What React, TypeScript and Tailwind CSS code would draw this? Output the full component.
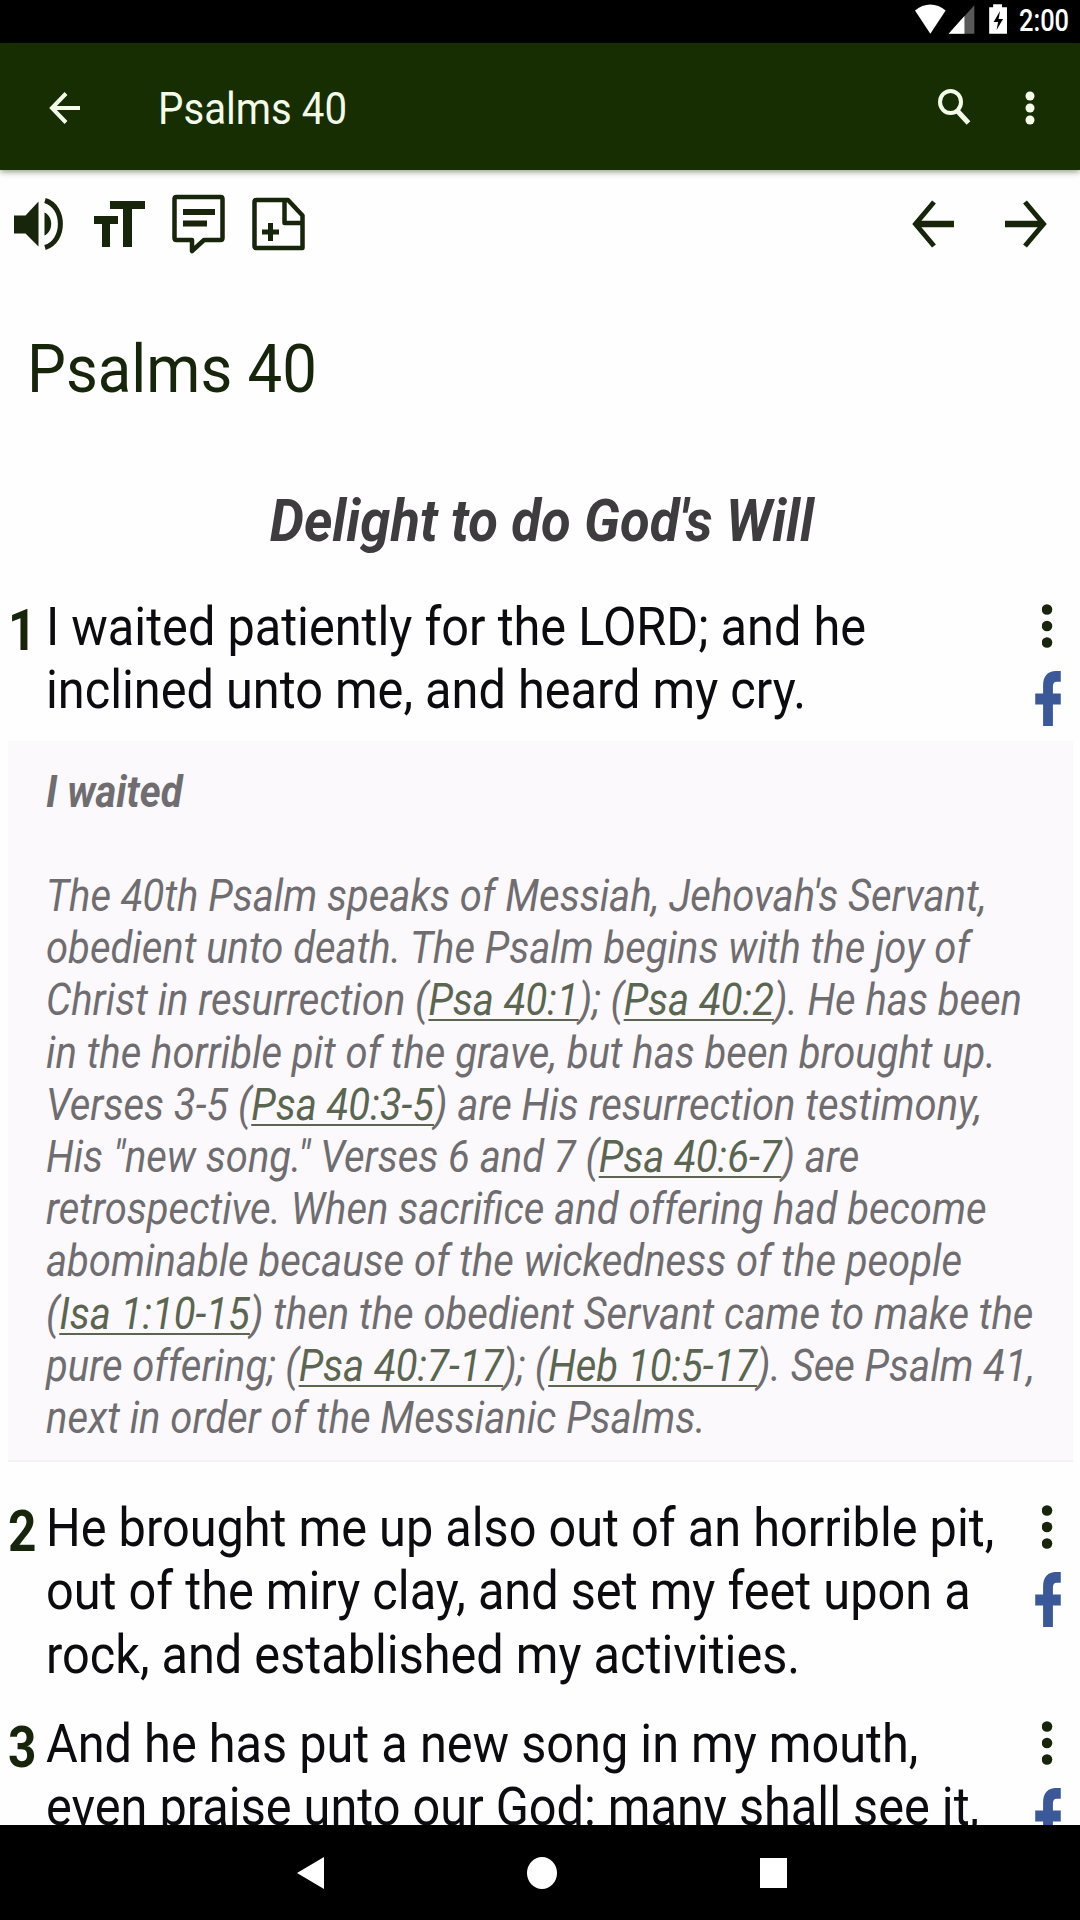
import React from "react";

interface VerseData {
  num: number;
  lines: string[];
}

const VERSE_ONE: VerseData = {
  num: 1,
  lines: ["I waited patiently for the LORD; and he", "inclined unto me, and heard my cry."],
};

const NEXT_VERSES: VerseData[] = [
  {
    num: 2,
    lines: [
      "He brought me up also out of an horrible pit,",
      "out of the miry clay, and set my feet upon a",
      "rock, and established my activities.",
    ],
  },
  {
    num: 3,
    lines: ["And he has put a new song in my mouth,", "even praise unto our God: many shall see it,"],
  },
];

const StatusBar: React.FC = () => (
  <div className="flex h-[43px] shrink-0 items-start bg-black pl-[915px] text-white">
    <svg className="mt-1 h-[30px] w-[94px]" viewBox="0 0 94 30" fill="currentColor">
      <path d="M0 6.5C9-1.8 22-1.8 31 6.5L15.5 30Z" />
      <path d="M60 1V30H34Z" opacity="0.35" />
      <path d="M50 12V30H34Z" />
      <path fillRule="evenodd" d="M79 0h9v3h5v27H75V3h4ZM86 7l-6.500 11h4.500l-1.500 8 6.500-11h-4.500Z" />
    </svg>
    <span className="ml-[11px] mt-[1px] origin-left scale-x-[0.82] text-[31px] font-medium leading-[39px]">2:00</span>
  </div>
);

const AppBar: React.FC = () => (
  <header className="relative flex h-[127px] shrink-0 items-center bg-[#162e02] text-[#f4fbe9] shadow-[0_2px_6px_rgba(22,46,2,0.45)]">
    <svg className="ml-[49px] mt-[2px] h-8 w-[32px]" viewBox="0 0 32 32" fill="none" stroke="currentColor" strokeWidth="4">
      <path d="M31 16H4M17 1.500L3 16l14 14.500" />
    </svg>
    <h1 className="ml-[77px] mt-[5px] flex-1 origin-left scale-x-[0.894] text-[45px] leading-[54px]">Psalms 40</h1>
    <svg className="h-9 w-[34px]" viewBox="0 0 34 36" fill="none" stroke="currentColor" strokeWidth="4">
      <ellipse cx="13.500" cy="13" rx="10.500" ry="11" />
      <path d="M20 21.500L31.500 34" strokeWidth="5" />
    </svg>
    <svg className="ml-[54px] mr-[45px] mt-[2px] h-9 w-[10px]" viewBox="0 0 10 36" fill="currentColor">
      <circle cx="5" cy="6" r="4.500" />
      <circle cx="5" cy="18" r="4.500" />
      <circle cx="5" cy="30" r="4.500" />
    </svg>
  </header>
);

const Toolbar: React.FC = () => (
  <div className="flex h-[108px] shrink-0 items-center pl-[14px] pr-[33px] text-[#17250b]">
    <svg className="h-[52px] w-[49px]" viewBox="0 0 49 52" fill="currentColor">
      <path d="M0 17.500h11.500L24.500 3.500v45L11.500 35.500H0ZM30.500 14.500c9 4 9 19 0 23Z" />
      <path d="M31 2.500c20.500 6 20.500 41 0 47" fill="none" stroke="currentColor" strokeWidth="5" />
    </svg>
    <svg className="ml-[31px] h-[46px] w-[51px]" viewBox="0 0 51 46" fill="currentColor">
      <path d="M16 0h35v8H38v38h-9V8H16ZM0 15h24v8h-8v23H8V23H0Z" />
    </svg>
    <svg className="ml-[27px] h-[60px] w-[53px]" viewBox="0 0 53 60" fill="none" stroke="currentColor" strokeWidth="4.500" strokeLinejoin="round">
      <path d="M4.500 3h44q2 0 2 2v39q0 2-2 2H32L20 57v-11H4.500q-2 0-2-2v-39q0-2 2-2Z" />
      <path d="M11 18h32M11 29.500h24" strokeWidth="6" />
    </svg>
    <svg className="ml-[27px] h-[54px] w-[53px]" viewBox="0 0 53 54" fill="none" stroke="currentColor" strokeWidth="4.500" strokeLinejoin="round">
      <path d="M4.500 3h31.500L50.500 18.500v32.500h-46q-2 0-2-2v-44q0-2 2-2Z" />
      <path d="M32.500 4v22h18" />
      <path d="M10 35h17M18.500 26v18" strokeWidth="5" />
    </svg>
    <svg className="ml-auto h-12 w-[42px]" viewBox="0 0 42 48" fill="none" stroke="currentColor" strokeWidth="5">
      <path d="M22 2L3.500 24 22 46" />
      <path d="M4 24h38" strokeWidth="6.500" />
    </svg>
    <svg className="ml-[51px] h-12 w-[42px]" viewBox="0 0 42 48" fill="none" stroke="currentColor" strokeWidth="5">
      <path d="M20 2l18.500 22L20 46" />
      <path d="M0 24h38" strokeWidth="6.500" />
    </svg>
  </div>
);

const Verse: React.FC<{ verse: VerseData }> = ({ verse }) => (
  <article className="flex shrink-0">
    <div className="w-[46px] shrink-0 pl-2">
      <div className="origin-left scale-x-[0.87] pt-[3px] text-[57px] font-bold leading-[66px] text-[#17250b]">{verse.num}</div>
    </div>
    <div className="w-[961px] origin-left scale-x-[0.901] whitespace-nowrap text-[54px] leading-[63.3px] text-[#0c0b10]">
      {verse.lines.map((line) => (
        <div key={line}>{line}</div>
      ))}
    </div>
    <div className="ml-[28px] w-[26px] shrink-0">
      <svg className="mx-auto mt-[9px] h-[44px] w-[12px] text-[#17250b]" viewBox="0 0 12 44" fill="currentColor">
        <circle cx="5" cy="5.500" r="5.300" />
        <circle cx="5" cy="22" r="5.300" />
        <circle cx="5" cy="38.500" r="5.300" />
      </svg>
      <svg className="mt-[23px] h-[55px] w-[26px] text-[#3b5998]" viewBox="0 0 26 56" fill="currentColor">
        <path d="M26 0v11h-4c-3 0-4 2-4 5v7h8v11h-8v22H8V34H0V23h8v-8C8 5 13 0 21 0Z" />
      </svg>
    </div>
  </article>
);

const Ref: React.FC<{ children: React.ReactNode }> = ({ children }) => (
  <a href="#" className="text-[#5a6650] underline decoration-2 underline-offset-[4px]">{children}</a>
);

const Commentary: React.FC = () => (
  <aside className="ml-2 mr-[7px] h-[721px] shrink-0 border-b-2 border-[#f3f2f5] bg-[#fbf9fc] pl-[38px] pt-[24.500px] italic text-[#6f6d70]">
    <div className="origin-left scale-x-[0.898] whitespace-nowrap text-[44.5px] leading-[52.2px]">
      <h3 className="mb-[52.2px] font-bold">I waited</h3>
      <p>
        The 40th Psalm speaks of Messiah, Jehovah's Servant,<br />
        obedient unto death. The Psalm begins with the joy of<br />
        Christ in resurrection (<Ref>Psa 40:1</Ref>); (<Ref>Psa 40:2</Ref>). He has been<br />
        in the horrible pit of the grave, but has been brought up.<br />
        Verses 3-5 (<Ref>Psa 40:3-5</Ref>) are His resurrection testimony,<br />
        His "new song." Verses 6 and 7 (<Ref>Psa 40:6-7</Ref>) are<br />
        retrospective. When sacrifice and offering had become<br />
        abominable because of the wickedness of the people<br />
        (<Ref>Isa 1:10-15</Ref>) then the obedient Servant came to make the<br />
        pure offering; (<Ref>Psa 40:7-17</Ref>); (<Ref>Heb 10:5-17</Ref>). See Psalm 41,<br />
        next in order of the Messianic Psalms.
      </p>
    </div>
  </aside>
);

const NavBar: React.FC = () => (
  <nav className="flex h-[95px] shrink-0 items-center bg-black pl-[297px] text-white">
    <svg className="h-8 w-[27px]" viewBox="0 0 27 32" fill="currentColor">
      <path d="M27 0v32L0 16Z" />
    </svg>
    <div className="ml-[203px] h-8 w-[30px] rounded-[50%] bg-white" />
    <div className="ml-[203px] h-[30px] w-[27px] bg-white" />
  </nav>
);

const App: React.FC = () => (
  <div className="flex h-[1920px] w-[1080px] flex-col overflow-hidden bg-[#fefefe] font-[Roboto,sans-serif]">
    <StatusBar />
    <AppBar />
    <main className="flex min-h-0 flex-1 flex-col overflow-hidden">
      <Toolbar />
      <h2 className="ml-[27px] mt-[51px] shrink-0 origin-left scale-x-[0.921] text-[67px] leading-[80px] text-[#17250b]">Psalms 40</h2>
      <h3 className="mt-[77px] shrink-0 scale-x-[0.921] whitespace-nowrap pl-1 text-center text-[59px] font-bold italic leading-[70px] text-[#3f3c40]">
        Delight to do God's Will
      </h3>
      <div className="mt-[39px] h-[146px] shrink-0">
        <Verse verse={VERSE_ONE} />
      </div>
      <Commentary />
      <div className="mt-[34px] flex shrink-0 flex-col gap-[25.800px]">
        {NEXT_VERSES.map((verse) => (
          <Verse key={verse.num} verse={verse} />
        ))}
      </div>
    </main>
    <NavBar />
  </div>
);

export default App;
